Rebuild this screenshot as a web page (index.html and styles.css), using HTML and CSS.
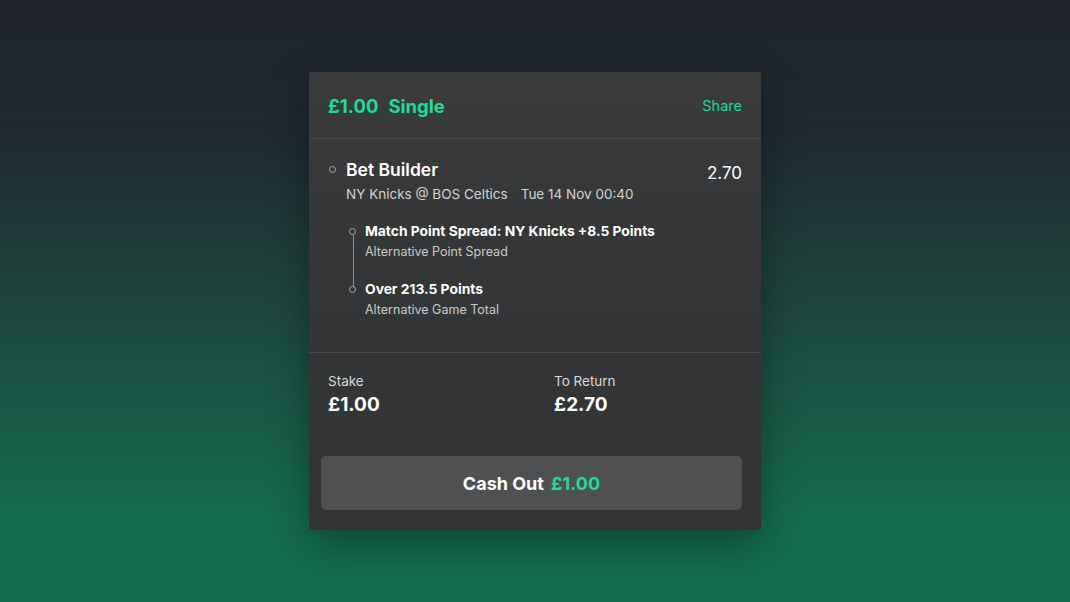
FILE: index.html
```html
<!DOCTYPE html>
<html lang="en">
<head>
  <meta charset="UTF-8">
  <title>Bet Slip</title>
  <link rel="stylesheet" href="styles.css">
</head>
<body>

  <div class="bet-card">

    <!-- Header -->
    <div class="bet-header">
      <div class="bet-title"><span>£1.00</span><span>Single</span></div>
      <div class="share">Share</div>
    </div>

    <!-- Selection -->
    <div class="bet-body">
      <div class="bet-row">
        <span class="dot"></span>
        <div class="bet-info">
          <div class="bet-name">Bet Builder</div>
          <div class="bet-event"><span>NY Knicks @ BOS Celtics</span><span>Tue 14 Nov 00:40</span></div>
        </div>
        <div class="odds">2.70</div>
      </div>

      <div class="legs">
        <div class="leg">
          <span class="dot small"></span>
          <div>
            <div class="leg-name">Match Point Spread: NY Knicks +8.5 Points</div>
            <div class="leg-market">Alternative Point Spread</div>
          </div>
        </div>
        <div class="leg">
          <span class="dot small"></span>
          <div>
            <div class="leg-name">Over 213.5 Points</div>
            <div class="leg-market">Alternative Game Total</div>
          </div>
        </div>
      </div>
    </div>

    <!-- Totals -->
    <div class="bet-totals">
      <div class="total">
        <div class="total-label">Stake</div>
        <div class="total-value">£1.00</div>
      </div>
      <div class="total">
        <div class="total-label">To Return</div>
        <div class="total-value">£2.70</div>
      </div>
    </div>

    <button class="cashout-btn">Cash Out <span>£1.00</span></button>
  </div>

</body>
</html>
```

FILE: styles.css
```css
html, body {
  height: 100%;
}

body {
  margin: 0;
  font-family: Inter, "Noto Sans", Arial, sans-serif;
  background: linear-gradient(180deg, #20242c 0%, #1f2a30 22%, #1d4a40 55%, #156b4e 85%, #146d4f 100%);
  display: flex;
  justify-content: center;
  align-items: flex-start;
  color: #ffffff;
}

.bet-card {
  margin-top: 72px;
  width: 452px;
  height: 458px;
  box-sizing: border-box;
  background: linear-gradient(180deg, #3a3c3c 0%, #343637 40%, #313334 100%);
  border-radius: 3px;
  box-shadow: 0 14px 40px rgba(0,0,0,0.35);
  display: flex;
  flex-direction: column;
}

.bet-header {
  height: 66px;
  padding: 0 19px;
  display: flex;
  align-items: center;
  justify-content: space-between;
  border-bottom: 1.5px solid #474a4a;
}

.bet-title {
  display: flex;
  gap: 10px;
  color: #1fdc94;
  font-size: 18.5px;
  font-weight: 700;
  margin-top: 2px;
}

.share {
  color: #1fd693;
  font-size: 14.5px;
  margin-top: 0;
}

.bet-body {
  height: 214px;
  padding: 20px 19px 0 19px;
  border-bottom: 1.5px solid #474a4a;
  box-sizing: border-box;
}

.bet-row {
  display: flex;
  align-items: flex-start;
}

.dot {
  width: 5px;
  height: 5px;
  border: 1.5px solid #a9abab;
  border-radius: 50%;
  margin: 7px 10px 0 1px;
  flex-shrink: 0;
}

.bet-info {
  flex: 1;
}

.bet-name {
  font-size: 17.5px;
  font-weight: 600;
  line-height: 22px;
}

.bet-event {
  margin-top: 5px;
  font-size: 13.5px;
  color: #d2d3d3;
  display: flex;
  gap: 13px;
}

.odds {
  font-size: 17px;
  line-height: 22px;
  margin-top: 3px;
}

.legs {
  position: relative;
  margin: 20px 0 0 21px;
  display: flex;
  flex-direction: column;
  gap: 21px;
}

.legs::before {
  content: "";
  position: absolute;
  left: 4px;
  top: 9px;
  height: 60px;
  border-left: 1.5px solid #8e9090;
}

.leg {
  display: flex;
  align-items: flex-start;
}

.dot.small {
  margin: 6px 9px 0 0;
  background: #343637;
  position: relative;
}

.leg-name {
  font-size: 13.8px;
  font-weight: 700;
  line-height: 18px;
}

.leg-market {
  font-size: 12.5px;
  color: #c9cbcb;
  margin-top: 4px;
}

.bet-totals {
  display: flex;
  padding: 20px 19px 0 19px;
  height: 102px;
  box-sizing: border-box;
}

.total {
  width: 226px;
  flex-shrink: 0;
}

.total-label {
  font-size: 13.5px;
  color: #d8d9d9;
}

.total-value {
  font-size: 19px;
  font-weight: 700;
  margin-top: 4px;
}

.cashout-btn {
  margin: 1px 19px 0 12px;
  height: 54px;
  border: none;
  border-radius: 5px;
  background-color: #4f5052;
  color: #ffffff;
  font-family: inherit;
  font-size: 18px;
  font-weight: 700;
  cursor: pointer;
}

.cashout-btn span {
  color: #1fdc94;
  margin-left: 3px;
}
```
